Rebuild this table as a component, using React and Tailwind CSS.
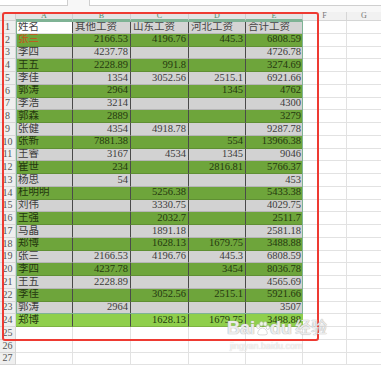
import React from 'react'

const rows = [
  ['姓名', '其他工资', '山东工资', '河北工资', '合计工资'],
  ['张三', '2166.53', '4196.76', '445.3', '6808.59'],
  ['李四', '4237.78', '', '', '4726.78'],
  ['王五', '2228.89', '991.8', '', '3274.69'],
  ['李佳', '1354', '3052.56', '2515.1', '6921.66'],
  ['郭涛', '2964', '', '1345', '4762'],
  ['李浩', '3214', '', '', '4300'],
  ['郭森', '2889', '', '', '3279'],
  ['张健', '4354', '4918.78', '', '9287.78'],
  ['张新', '7881.38', '', '554', '13966.38'],
  ['王睿', '3167', '4534', '1345', '9046'],
  ['崔世', '234', '', '2816.81', '5766.37'],
  ['杨思', '54', '', '', '453'],
  ['杜明明', '', '5256.38', '', '5433.38'],
  ['刘伟', '', '3330.75', '', '4029.75'],
  ['王强', '', '2032.7', '', '2511.7'],
  ['马晶', '', '1891.18', '', '2581.18'],
  ['郑博', '', '1628.13', '1679.75', '3488.88'],
  ['张三', '2166.53', '4196.76', '445.3', '6808.59'],
  ['李四', '4237.78', '', '3454', '8036.78'],
  ['王五', '2228.89', '', '', '4565.69'],
  ['李佳', '', '3052.56', '2515.1', '5921.66'],
  ['郭涛', '2964', '', '', '3507'],
  ['郑博', '', '1628.13', '1679.75', '3488.88'],
]

const widths = ['w-[57px]', 'w-[58px]', 'w-[58px]', 'w-[57px]', 'w-[57px]']

function rowBg(i) {
  if (i === 0) return null
  if (i === 23) return 'bg-[#8fcf4c]'
  return i % 2 === 1 ? 'bg-[#6ea53b]' : 'bg-[#d2d2d2]'
}

function DataRow({ cells, i }) {
  const bg = rowBg(i)
  const green = i % 2 === 1 || i === 23
  return (
    <div className="flex h-[12.75px]">
      <div className="w-[16px] shrink-0 bg-[#efefef] border-r border-b border-[#d6d6d6] text-[#555] text-[10px] flex items-center justify-center leading-none">
        {i + 1}
      </div>
      {cells.map((c, j) => {
        const cellBg = i === 0 ? (j === 0 ? 'bg-white' : 'bg-[#d4d4d4]') : bg
        let color = green ? 'text-[#24380f]' : 'text-[#3c3c3c]'
        if (i === 1 && j === 0) color = 'text-[#c8501a]'
        if (i === 0) color = 'text-[#444]'
        const align = j === 0 || i === 0 ? 'justify-start pl-[2px]' : 'justify-end pr-[2px]'
        return (
          <div
            key={j}
            className={`${widths[j]} shrink-0 ${cellBg} ${color} ${align} flex items-center leading-none whitespace-nowrap overflow-hidden border-b border-[#00000022] ${j < 4 ? 'border-r border-r-[#4a4a4a]' : ''}`}
          >
            {c}
          </div>
        )
      })}
      <div className="w-[44px] shrink-0 border-r border-b border-[#e2e2e2]" />
      <div className="flex-1 border-b border-[#e2e2e2]" />
    </div>
  )
}

function EmptyRow({ n }) {
  return (
    <div className="flex h-[12.75px]">
      <div className="w-[16px] shrink-0 bg-[#efefef] border-r border-b border-[#d6d6d6] text-[#555] text-[10px] flex items-center justify-center leading-none">
        {n}
      </div>
      {widths.map((w, j) => (
        <div key={j} className={`${w} shrink-0 border-r border-b border-[#e2e2e2]`} />
      ))}
      <div className="w-[44px] shrink-0 border-r border-b border-[#e2e2e2]" />
      <div className="flex-1 border-b border-[#e2e2e2]" />
    </div>
  )
}

function Paw() {
  return (
    <svg width="15" height="15" viewBox="0 0 14 14" className="inline-block">
      <g fill="#ffffff" fillOpacity="0.85" stroke="#c4c4c4" strokeWidth="0.6">
        <ellipse cx="3" cy="5" rx="1.6" ry="2" />
        <ellipse cx="6" cy="2.6" rx="1.6" ry="2" />
        <ellipse cx="9.5" cy="2.8" rx="1.6" ry="2" />
        <ellipse cx="12" cy="6" rx="1.5" ry="1.9" />
        <path d="M7 6.5c-2.5 0-4.5 3-4.5 5 0 1.5 2 1.5 4.5 1.5s4.5 0 4.5-1.5c0-2-2-5-4.5-5z" />
      </g>
    </svg>
  )
}

export default function App() {
  return (
    <div
      className="relative w-[381px] h-[365px] overflow-hidden bg-white text-[10.5px]"
      style={{ fontFamily: '"Liberation Serif", "Noto Sans CJK SC", serif' }}
    >
      {/* formula bar strip */}
      <div className="flex h-[12px] bg-[#f7f7f7]">
        <div className="w-[68px] h-[6px] bg-white border-b border-r border-[#cfcfcf]" />
        <div className="w-[21px]" />
        <div className="flex-1 h-[6px] bg-white border-b border-l border-[#cfcfcf]" />
      </div>

      {/* column header */}
      <div className="flex h-[9px] text-[8px] leading-none">
        <div className="w-[16px] shrink-0 bg-[#e9e9e9] border-r border-b border-[#cfcfcf]" />
        {['A', 'B', 'C', 'D', 'E'].map((l, j) => (
          <div key={l} className={`${widths[j]} shrink-0 bg-[#e3e3e3] border-r border-[#cfcfcf] border-b-2 border-b-[#7fb395] text-[#4f8d6c] flex items-center justify-center`}>
            {l}
          </div>
        ))}
        <div className="w-[44px] shrink-0 bg-[#f1f1f1] border-r border-b border-[#d6d6d6] text-[#777] flex items-center justify-center">F</div>
        <div className="flex-1 bg-[#f1f1f1] border-b border-[#d6d6d6] text-[#777] flex items-center justify-center">G</div>
      </div>

      {rows.map((r, i) => (
        <DataRow key={i} cells={r} i={i} />
      ))}
      {[25, 26, 27].map((n) => (
        <EmptyRow key={n} n={n} />
      ))}

      {/* selection */}
      <div className="absolute left-[16px] top-[21px] w-[287px] h-[293px] border-[1.5px] border-[#7fb395] pointer-events-none" />

      {/* red frame */}
      <div className="absolute left-[2px] top-[12px] w-[317px] h-[329px] border-2 border-[#ee3a32] rounded-[3px] pointer-events-none" />

      {/* watermark */}
      <div className="absolute left-[227px] top-[319px] pointer-events-none flex flex-col items-start">
        <div
          className="flex items-center text-[18px] font-bold leading-none text-white/75"
          style={{ fontFamily: '"Liberation Sans", "Noto Sans CJK SC", sans-serif', textShadow: '0 0 1px #b0b0b0, 0 0 1px #b0b0b0' }}
        >
          <span>Bai</span>
          <Paw />
          <span>du</span>
          <span className="ml-[3px] text-[16px] font-normal">经验</span>
        </div>
        <div
          className="mt-[5px] ml-[3px] text-[9px] leading-none text-white/80"
          style={{ fontFamily: '"Liberation Sans", sans-serif', textShadow: '0 0 1px #b5b5b5' }}
        >
          jingyan.baidu.com
        </div>
      </div>
    </div>
  )
}
